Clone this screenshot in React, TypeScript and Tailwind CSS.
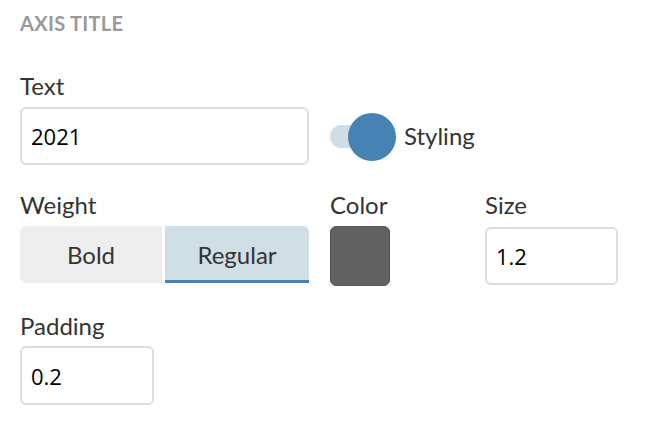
export default function App() {
  const label = "text-[24px] leading-[30px] text-[#333] font-['Lato',sans-serif]";
  const input =
    "block h-[58px] rounded-[6px] border-2 border-[#ddd] bg-white px-[9px] text-[22px] text-black font-['Open_Sans',sans-serif] outline-none";

  return (
    <div className="min-h-screen bg-white px-5 pt-[11px] font-['Lato',sans-serif]">
      <div className="text-[20px] font-bold leading-[24px] tracking-[0.3px] text-[#999]">AXIS TITLE</div>

      {/* Text + Styling toggle */}
      <div className="mt-[36px] flex items-end">
        <div className="w-[289px]">
          <div className={label}>Text</div>
          <input className={`${input} mt-[6px] w-[289px]`} defaultValue="2021" />
        </div>
        <div className="ml-[21px] flex h-[58px] items-center">
          <div className="relative h-[23px] w-[66px]">
            <div className="absolute left-0 top-0 h-[23px] w-[42px] rounded-full bg-[#cfdde6]" />
            <div className="absolute left-[18px] top-[-12px] h-[48px] w-[48px] rounded-full bg-[#4682b4]" />
          </div>
          <span className={`${label} ml-[8px]`}>Styling</span>
        </div>
      </div>

      {/* Weight / Color / Size */}
      <div className="mt-[25px] flex">
        <div className="w-[289px]">
          <div className={label}>Weight</div>
          <div className="mt-[6px] flex h-[57px] gap-[3px] text-[24px] text-[#333]">
            <button className="flex-1 rounded-l-[6px] border-b-[3px] border-transparent bg-[#eeeeee] pt-[3px]">
              Bold
            </button>
            <button className="w-[144px] rounded-tr-[6px] border-b-[3px] border-[#4682b4] bg-[#d0dee6] pt-[3px]">
              Regular
            </button>
          </div>
        </div>
        <div className="ml-[21px] w-[155px]">
          <div className={label}>Color</div>
          <div className="mt-[6px] h-[60px] w-[60px] rounded-[6px] border border-[#555] bg-[#616161]" />
        </div>
        <div className="w-[133px]">
          <div className={label}>Size</div>
          <input className={`${input} mt-[7px] w-[133px]`} defaultValue="1.2" />
        </div>
      </div>

      {/* Padding */}
      <div className="mt-[25px]">
        <div className={label}>Padding</div>
        <input className={`${input} mt-[5px] w-[134px] h-[59px]`} defaultValue="0.2" />
      </div>
    </div>
  );
}
